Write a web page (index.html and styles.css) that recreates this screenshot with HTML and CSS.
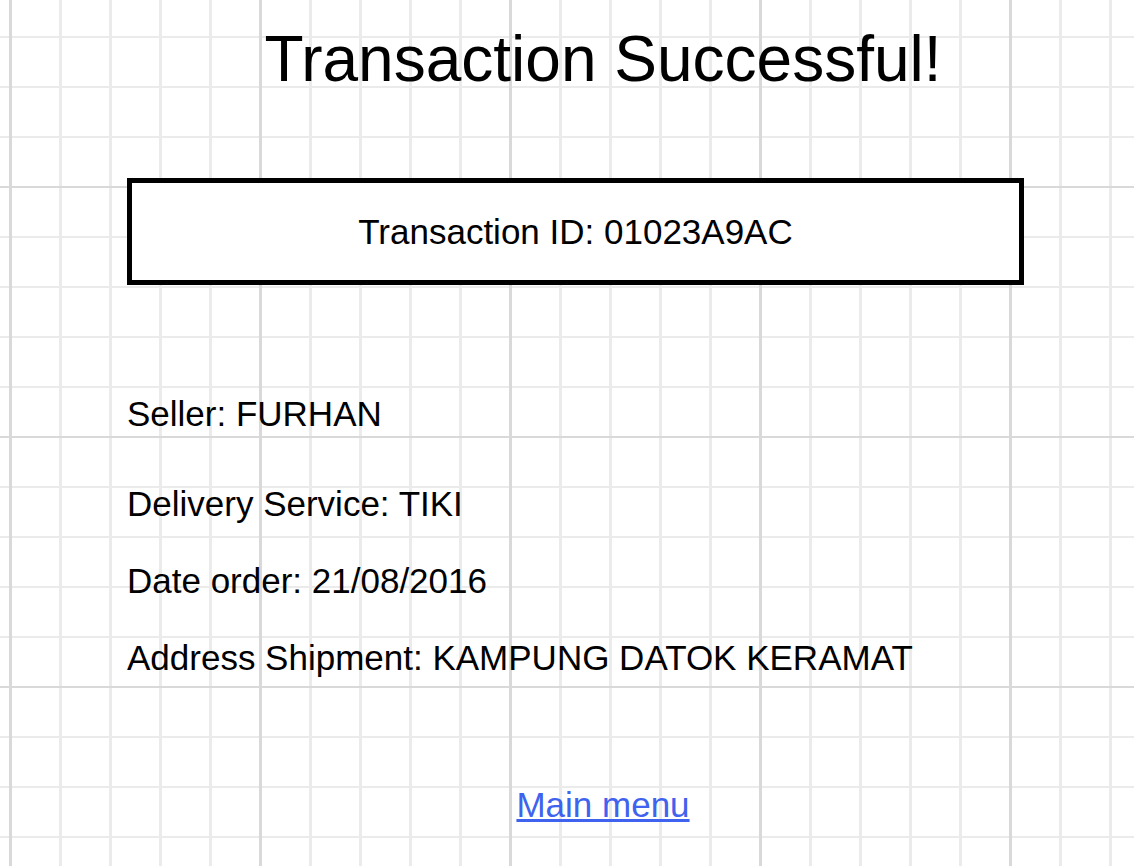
FILE: index.html
```html
<!DOCTYPE html>
<html lang="en">
<head>
<meta charset="utf-8">
<title>Transaction Successful</title>
<link rel="stylesheet" href="styles.css">
</head>
<body>
<main class="page">
  <h1 class="title">Transaction Successful!</h1>
  <div class="txn-box">Transaction ID: 01023A9AC</div>
  <div class="details">
    <p class="row row-seller">Seller: FURHAN</p>
    <p class="row">Delivery Service: TIKI</p>
    <p class="row">Date order: 21/08/2016</p>
    <p class="row">Address Shipment: KAMPUNG DATOK KERAMAT</p>
  </div>
  <div class="actions"><a class="menu-link" href="#">Main menu</a></div>
</main>
</body>
</html>
```

FILE: styles.css
```css
html, body {
  margin: 0;
  padding: 0;
}
body {
  min-height: 866px;
  background-color: #ffffff;
  background-image:
    linear-gradient(to right, #d9d9d9 3px, transparent 3px),
    linear-gradient(to bottom, #d9d9d9 2px, transparent 2px),
    linear-gradient(to right, #ebebeb 3px, transparent 3px),
    linear-gradient(to bottom, #ebebeb 2px, transparent 2px);
  background-size: 250px 250px, 250px 250px, 50px 50px, 50px 50px;
  background-position: 9px 0, 0 186px, 9px 0, 0 36px;
  font-family: "Liberation Sans", Arial, sans-serif;
  color: #000;
}
.page {
  padding-top: 27px;
}
.title {
  margin: 0 0 0 72px;
  font-size: 64px;
  line-height: 64px;
  font-weight: normal;
  text-align: center;
}
.txn-box {
  margin: 87px 0 0 127px;
  width: 897px;
  height: 107px;
  box-sizing: border-box;
  border: 5px solid #000;
  background: #fff;
  display: flex;
  align-items: center;
  justify-content: center;
  font-size: 35px;
}
.details {
  margin: 90px 0 0 127px;
}
.row {
  margin: 0;
  font-size: 35px;
  line-height: 77px;
}
.row-seller {
  margin-bottom: 13px;
}
.actions {
  margin: 70px 0 0 72px;
  text-align: center;
  font-size: 35px;
  line-height: 77px;
}
.menu-link {
  color: #3f63ee;
}
```
